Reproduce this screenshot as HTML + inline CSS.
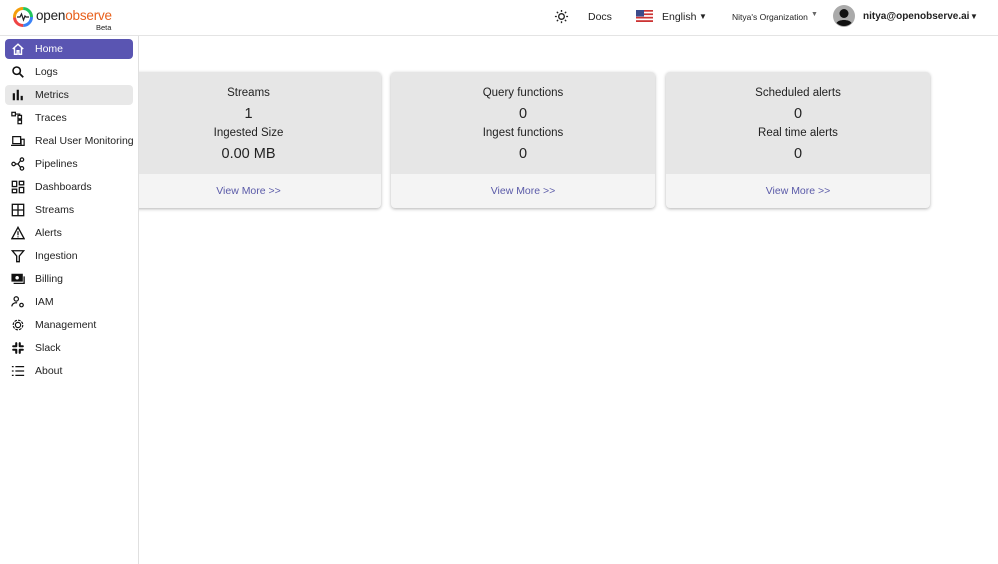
<!DOCTYPE html><html><head><style>
*{margin:0;padding:0;box-sizing:border-box}
body{width:998px;height:564px;overflow:hidden;background:#fff;font-family:"Liberation Sans",sans-serif;color:#222;position:relative;white-space:nowrap}
.hdr{position:absolute;left:0;top:0;width:998px;height:36px;border-bottom:1px solid #e4e4e4;background:#fff}
.side{position:absolute;left:0;top:36px;width:139px;height:528px;border-right:1px solid #e0e0e0;background:#fff;z-index:2}
.item{position:absolute;left:5px;width:128px;height:20px;font-size:10.5px;display:flex;align-items:center;border-radius:4px}
.item svg{position:absolute;left:6px;width:14px;height:14px}
.item span{position:absolute;left:30px;top:4px}
.card{position:absolute;top:72px;height:136px;border-radius:4px;background:#f4f4f4;box-shadow:0 1px 3px rgba(0,0,0,.3);overflow:hidden;text-align:center}
.card .b{height:102px;background:#e6e6e6;padding-top:15px}
.card .t{font-size:11.5px;height:15px}
.card .v{font-size:14.5px;height:25px;padding-top:4px}
.card .f{font-size:10.5px;color:#5a5aa8;padding-top:11px}
.h{position:absolute;font-size:10.5px;top:11px}
</style></head><body>
<div class="hdr">
<svg style="position:absolute;left:12px;top:6px" width="22" height="22" viewBox="0 0 22 22"><circle cx="11" cy="11" r="8.5" fill="none" stroke="#3b82f6" stroke-width="3" stroke-dasharray="13 40"/><circle cx="11" cy="11" r="8.5" fill="none" stroke="#ef4444" stroke-width="3" stroke-dasharray="0 13 13 40"/><circle cx="11" cy="11" r="8.5" fill="none" stroke="#f59e0b" stroke-width="3" stroke-dasharray="0 26 14 40"/><circle cx="11" cy="11" r="8.5" fill="none" stroke="#22c55e" stroke-width="3" stroke-dasharray="0 40 14 40"/><path d="M5 11h3l1.5-3 2 6 1.5-4 1 1h3" stroke="#222" stroke-width="1.2" fill="none"/></svg>
<div style="position:absolute;left:36px;top:8px;font-size:13.5px;letter-spacing:-.2px"><span>open</span><span style="color:#e8601c">observe</span></div>
<div style="position:absolute;left:96px;top:23px;font-size:7.5px">Beta</div>
<svg style="position:absolute;left:554px;top:9px" width="15" height="15" viewBox="0 0 16 16"><circle cx="8" cy="8" r="3" fill="none" stroke="#222" stroke-width="1.4"/><g stroke="#222" stroke-width="1.4"><path d="M8 1v2M8 13v2M1 8h2M13 8h2M3 3l1.4 1.4M11.6 11.6L13 13M3 13l1.4-1.4M11.6 4.4L13 3"/></g></svg>
<div class="h" style="left:588px">Docs</div>
<svg style="position:absolute;left:636px;top:10px" width="17" height="12" viewBox="0 0 17 12"><rect width="17" height="12" fill="#c33"/><g fill="#fff"><rect y="1.7" width="17" height="1.7"/><rect y="5.1" width="17" height="1.7"/><rect y="8.5" width="17" height="1.7"/></g><rect width="8" height="6.5" fill="#3b4a8a"/></svg>
<div class="h" style="left:662px">English</div>
<div class="h" style="left:699px;font-size:8px;top:12px">▼</div>
<div class="h" style="left:732px;font-size:8.5px;top:12px">Nitya's Organization</div>
<div class="h" style="left:811px;font-size:7px;top:11px;color:#666">▼</div>
<svg style="position:absolute;left:833px;top:5px" width="22" height="22" viewBox="0 0 22 22"><circle cx="11" cy="11" r="11" fill="#aaa"/><circle cx="11" cy="8.5" r="4.5" fill="#111"/><path d="M3.5 18c2-4 13-4 15 0a11 11 0 0 1-15 0z" fill="#111"/></svg>
<div class="h" style="left:863px;font-weight:bold;font-size:10px">nitya@openobserve.ai</div>
<div class="h" style="left:970px;font-size:8px;top:12px">▼</div>
</div>
<div class="side">
<div class="item" style="top:3px;background:#5a55b2;color:#fff"><svg viewBox="0 0 16 16"><path d="M2 8L8 2.5 14 8M4 6.5V14h3v-4h2v4h3V6.5" fill="none" stroke="#fff" stroke-width="1.6"/></svg><span>Home</span></div>
<div class="item" style="top:26px"><svg viewBox="0 0 16 16"><circle cx="6.5" cy="6.5" r="4.2" fill="none" stroke="#111" stroke-width="1.8"/><path d="M9.5 9.5L14 14" stroke="#111" stroke-width="2"/></svg><span>Logs</span></div>
<div class="item" style="top:49px;background:#e8e8e8"><svg viewBox="0 0 16 16"><rect x="2" y="6" width="2.5" height="8" fill="#111"/><rect x="6.5" y="2" width="2.5" height="12" fill="#111"/><rect x="11" y="9" width="2.5" height="5" fill="#111"/></svg><span>Metrics</span></div>
<div class="item" style="top:72px"><svg viewBox="0 0 16 16"><g fill="none" stroke="#111" stroke-width="1.4"><rect x="1" y="1.5" width="4" height="4"/><rect x="8" y="5" width="4" height="4"/><rect x="8" y="10.5" width="4" height="4"/><path d="M5 3.5h5v1.5M10 9v1.5"/></g></svg><span>Traces</span></div>
<div class="item" style="top:95px"><svg viewBox="0 0 16 16"><g fill="none" stroke="#111" stroke-width="1.4"><rect x="2" y="3" width="9" height="8"/><path d="M0 13h11"/><rect x="11.5" y="6" width="3.5" height="7"/></g></svg><span>Real User Monitoring</span></div>
<div class="item" style="top:118px"><svg viewBox="0 0 16 16"><g fill="none" stroke="#111" stroke-width="1.4"><circle cx="3" cy="8" r="2"/><circle cx="12.5" cy="3" r="2"/><circle cx="12.5" cy="13" r="2"/><path d="M5 8h3l3-4M8 8l3 4"/></g></svg><span>Pipelines</span></div>
<div class="item" style="top:141px"><svg viewBox="0 0 16 16"><g fill="none" stroke="#111" stroke-width="1.5"><rect x="1.5" y="1.5" width="5" height="6"/><rect x="9.5" y="1.5" width="5" height="4"/><rect x="1.5" y="10.5" width="5" height="4"/><rect x="9.5" y="8.5" width="5" height="6"/></g></svg><span>Dashboards</span></div>
<div class="item" style="top:164px"><svg viewBox="0 0 16 16"><g fill="none" stroke="#111" stroke-width="1.5"><rect x="1.5" y="1.5" width="13" height="13"/><path d="M8 1.5v13M1.5 8h13"/></g></svg><span>Streams</span></div>
<div class="item" style="top:187px"><svg viewBox="0 0 16 16"><path d="M8 1.5L15 14.5H1z" fill="none" stroke="#111" stroke-width="1.5"/><path d="M8 6v4.5M8 11.8v1.2" stroke="#111" stroke-width="1.4"/></svg><span>Alerts</span></div>
<div class="item" style="top:210px"><svg viewBox="0 0 16 16"><path d="M1.5 2h13L9.5 8v6.5h-3V8z" fill="none" stroke="#111" stroke-width="1.5"/></svg><span>Ingestion</span></div>
<div class="item" style="top:233px"><svg viewBox="0 0 16 16"><rect x="0.5" y="2" width="13" height="9" fill="#111"/><circle cx="7" cy="6.5" r="2" fill="#fff"/><path d="M15 5v8H3" fill="none" stroke="#111" stroke-width="1.5"/></svg><span>Billing</span></div>
<div class="item" style="top:256px"><svg viewBox="0 0 16 16"><g fill="none" stroke="#111" stroke-width="1.4"><circle cx="6" cy="4.5" r="2.5"/><path d="M1 13c0-3 3-4.5 6-4"/><circle cx="12" cy="11.5" r="2"/></g></svg><span>IAM</span></div>
<div class="item" style="top:279px"><svg viewBox="0 0 16 16"><g fill="none" stroke="#111" stroke-width="1.3"><circle cx="8" cy="8" r="5.5" stroke-dasharray="3 1.3"/><circle cx="8" cy="8" r="3"/></g></svg><span>Management</span></div>
<div class="item" style="top:302px"><svg viewBox="0 0 16 16"><g stroke="#111" stroke-width="2.4" stroke-linecap="round"><path d="M6 2.5v3M10 10.5v3M2.5 10h3M10.5 6h3M6 10v3.5M10 2.5v3.5M2.5 6h3.5M10 10h3.5"/></g></svg><span>Slack</span></div>
<div class="item" style="top:325px"><svg viewBox="0 0 16 16"><g stroke="#111" stroke-width="1.5"><path d="M1 3h2M1 8h2M1 13h2M5 3h10M5 8h10M5 13h10"/></g></svg><span>About</span></div>
</div>
<div class="card" style="left:116px;width:265px"><div class="b"><div class="t">Streams</div><div class="v">1</div><div class="t">Ingested Size</div><div class="v">0.00 MB</div></div><div class="f">View More &gt;&gt;</div></div>
<div class="card" style="left:391px;width:264px"><div class="b"><div class="t">Query functions</div><div class="v">0</div><div class="t">Ingest functions</div><div class="v">0</div></div><div class="f">View More &gt;&gt;</div></div>
<div class="card" style="left:666px;width:264px"><div class="b"><div class="t">Scheduled alerts</div><div class="v">0</div><div class="t">Real time alerts</div><div class="v">0</div></div><div class="f">View More &gt;&gt;</div></div>
</body></html>
